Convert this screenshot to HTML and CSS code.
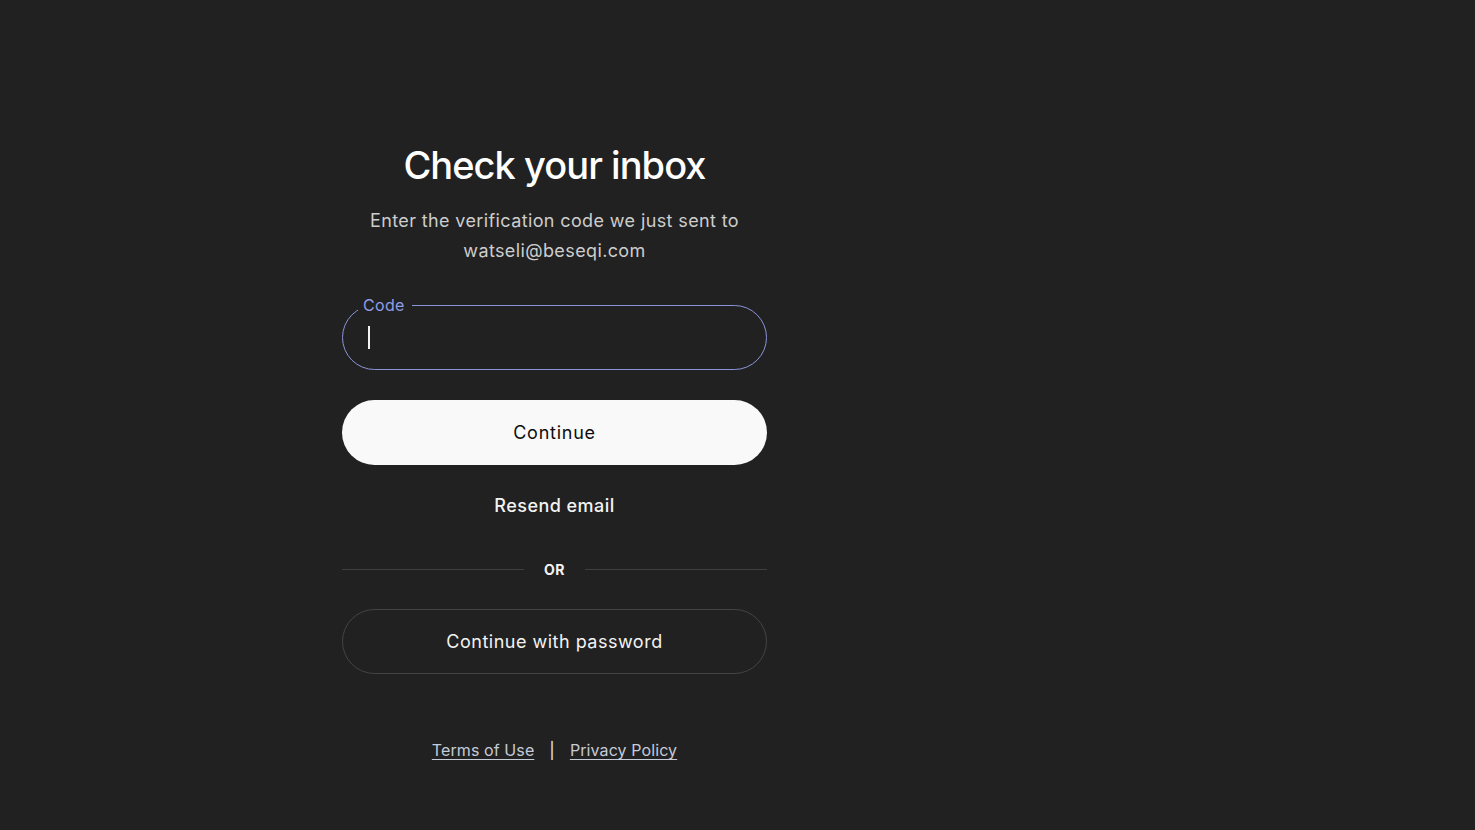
FILE: index.html
```html
<!DOCTYPE html>
<html lang="en">
<head>
<meta charset="utf-8">
<title>Check your inbox</title>
<link rel="stylesheet" href="styles.css">
</head>
<body>
<div class="page">
  <main class="pane">
    <section class="card">
      <h1 class="title">Check your inbox</h1>
      <p class="subtitle">Enter the verification code we just sent to watseli@beseqi.com</p>

      <form class="form">
        <div class="field">
          <label class="field-label" for="code">Code</label>
          <input class="field-input" id="code" type="text" autocomplete="one-time-code">
          <span class="caret"></span>
        </div>
        <button class="btn btn-primary" type="button">Continue</button>
      </form>

      <button class="link-btn" type="button">Resend email</button>

      <div class="divider"><span class="divider-line"></span><span class="divider-text">OR</span><span class="divider-line"></span></div>

      <button class="btn btn-outline" type="button">Continue with password</button>

      <footer class="footer">
        <a class="footer-link" href="#">Terms of Use</a>
        <span class="footer-sep">|</span>
        <a class="footer-link" href="#">Privacy Policy</a>
      </footer>
    </section>
  </main>
</div>
</body>
</html>
```

FILE: styles.css
```css
* { box-sizing: border-box; }

html, body {
  margin: 0;
  padding: 0;
  height: 100%;
  background: #212121;
  font-family: Inter, "Noto Sans", "Liberation Sans", sans-serif;
  color: #ececec;
}

.page {
  display: flex;
  min-height: 830px;
}

.pane {
  width: 1109px;
  display: flex;
  justify-content: center;
}

.card {
  width: 425px;
  padding-top: 142px;
  display: flex;
  flex-direction: column;
  align-items: stretch;
  text-align: center;
}

.title {
  margin: 0;
  font-size: 38px;
  line-height: 46px;
  font-weight: 500;
  letter-spacing: -0.95px;
  color: #ffffff;
}

.subtitle {
  margin: 18px auto 0;
  width: 400px;
  font-size: 18px;
  line-height: 30px;
  font-weight: 400;
  letter-spacing: 0.38px;
  color: #cdcdcd;
}

.form {
  margin-top: 39px;
  display: flex;
  flex-direction: column;
  gap: 30px;
}

.field {
  position: relative;
  height: 65px;
}

.field-input {
  width: 100%;
  height: 65px;
  border: 1px solid #8a94d8;
  border-radius: 33px;
  background: transparent;
  padding: 0 26px;
  font: inherit;
  font-size: 17px;
  color: #fff;
  outline: none;
  caret-color: transparent;
}

.field-label {
  position: absolute;
  left: 16px;
  top: -11px;
  padding: 0 7px 0 5px;
  background: #212121;
  font-size: 16px;
  line-height: 22px;
  letter-spacing: 0.3px;
  color: #8f9de6;
}

.caret {
  position: absolute;
  left: 26px;
  top: 21px;
  width: 1.5px;
  height: 23px;
  background: #f2f2f2;
}

.btn {
  height: 65px;
  width: 100%;
  border-radius: 33px;
  font: inherit;
  font-size: 18px;
  line-height: 24px;
  font-weight: 400;
  letter-spacing: 0.5px;
  padding-top: 2px;
  cursor: pointer;
}

.btn-primary {
  border: none;
  background: #f9f9f9;
  color: #0d0d0d;
  letter-spacing: 0.75px;
}

.link-btn {
  margin: 29px auto 0;
  border: none;
  background: none;
  padding: 0;
  font: inherit;
  font-size: 18px;
  line-height: 24px;
  font-weight: 500;
  letter-spacing: 0.45px;
  color: #f3f3f3;
  cursor: pointer;
}

.divider {
  margin-top: 41px;
  display: flex;
  align-items: center;
  height: 20px;
}

.divider-line {
  flex: 1;
  height: 1px;
  background: #3f3f3f;
}

.divider-text {
  padding: 0 20px;
  font-size: 14px;
  font-weight: 700;
  letter-spacing: 0.6px;
  color: #f3f3f3;
}

.btn-outline {
  margin-top: 30px;
  border: 1px solid #444444;
  background: transparent;
  color: #f3f3f3;
}

.footer {
  margin-top: 64px;
  display: flex;
  justify-content: center;
  align-items: center;
  gap: 15px;
  font-size: 16px;
  line-height: 24px;
}

.footer-link {
  color: #c6cbd8;
  text-decoration: underline;
  text-underline-offset: 3px;
  text-decoration-thickness: 1px;
  letter-spacing: 0.1px;
}

.footer-sep {
  color: #d0d0d0;
  font-weight: 500;
}
```
